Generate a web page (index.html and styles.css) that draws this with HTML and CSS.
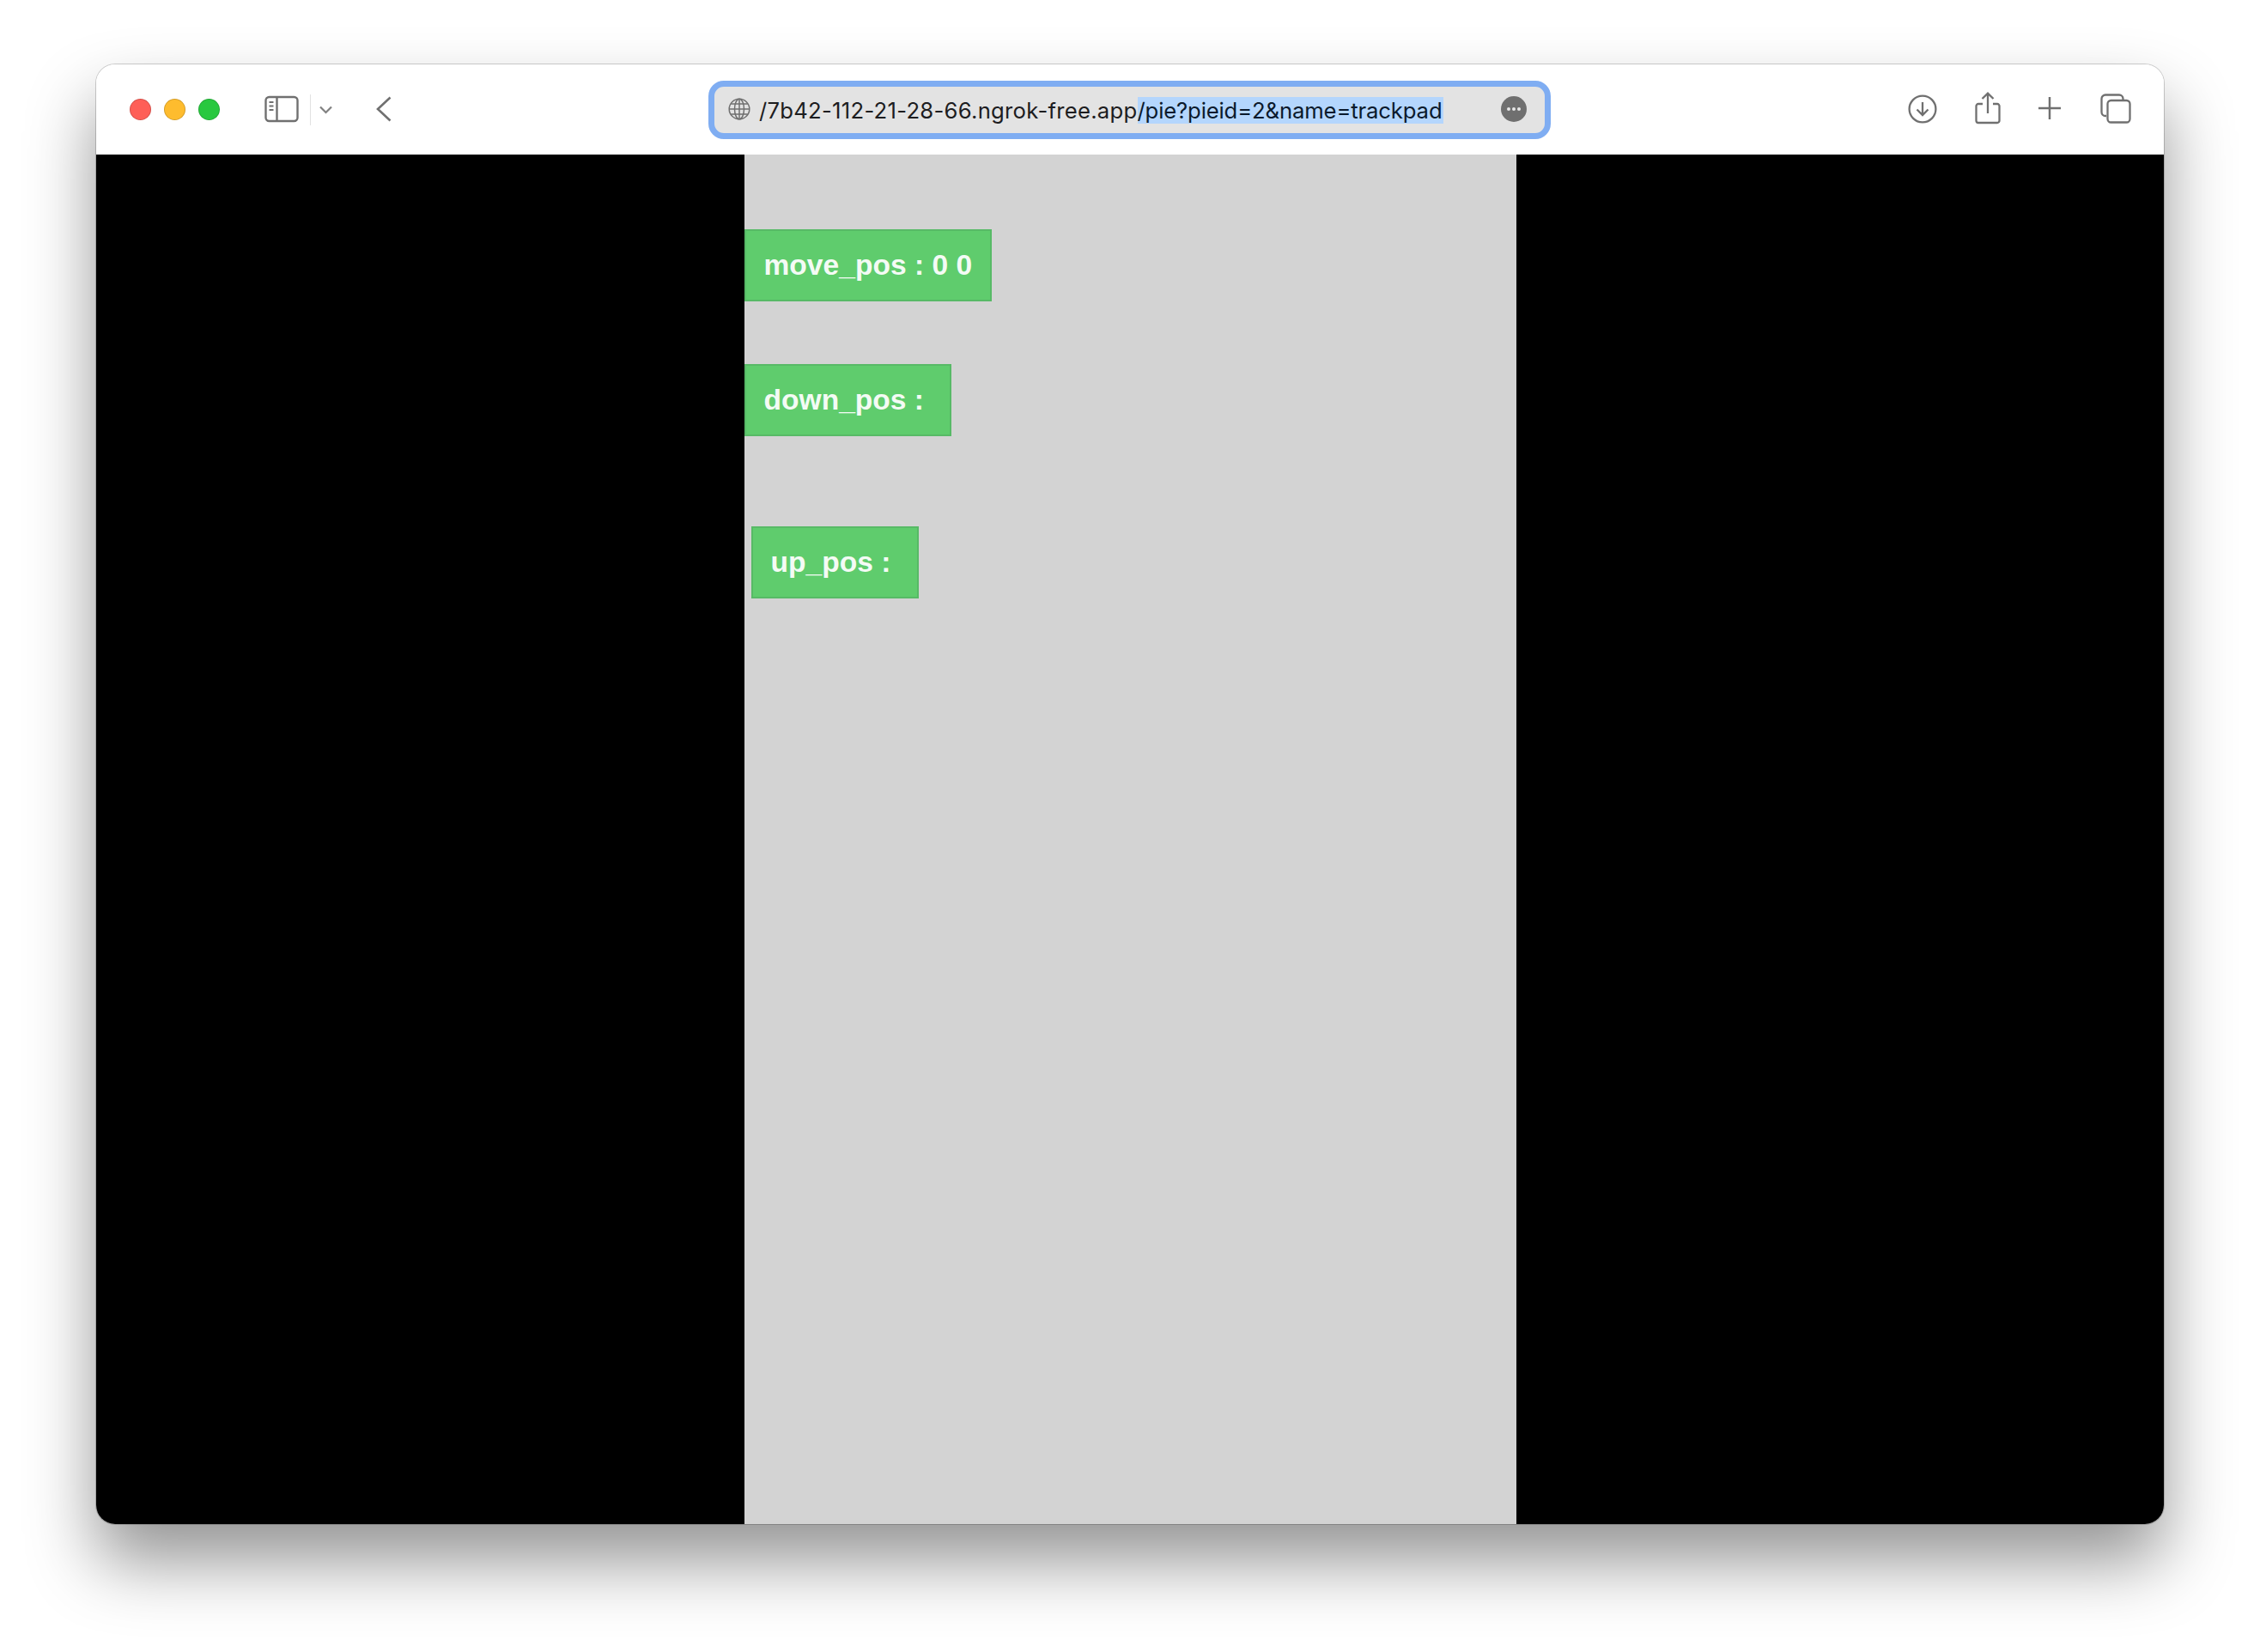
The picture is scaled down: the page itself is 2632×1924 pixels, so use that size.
FILE: index.html
```html
<!DOCTYPE html>
<html lang="en">
<head>
<meta charset="utf-8">
<title>trackpad</title>
<link rel="stylesheet" href="styles.css">
</head>
<body>
<div class="window">
  <header class="toolbar">
    <div class="lights">
      <span class="light red"></span>
      <span class="light yellow"></span>
      <span class="light green"></span>
    </div>
    <svg class="icon sidebar" width="40" height="32" viewBox="0 0 40 32" fill="none" stroke="#707070" stroke-width="2.4">
      <rect x="1.5" y="2" width="37" height="28" rx="4"/>
      <path d="M14.5 2v28"/>
      <path d="M5.5 8h5M5.5 12.5h5M5.5 17h5" stroke-width="1.8"/>
    </svg>
    <span class="divider"></span>
    <svg class="icon chevron" width="15" height="10" viewBox="0 0 15 10" fill="none" stroke="#808080" stroke-width="2.2">
      <path d="M1 1.5l6.5 6.5 6.5-6.5"/>
    </svg>
    <svg class="icon back" width="18" height="30" viewBox="0 0 18 30" fill="none" stroke="#707070" stroke-width="2.6">
      <path d="M16.5 1.5L2 15l14.5 13.5"/>
    </svg>
    <div class="address">
      <svg class="icon globe" width="26" height="26" viewBox="0 0 26 26" fill="none" stroke="#707070" stroke-width="1.5">
        <circle cx="13" cy="13" r="11.8"/>
        <ellipse cx="13" cy="13" rx="5.5" ry="11.8"/>
        <path d="M13 1v24M1.5 13h23M3.2 7h19.6M3.2 19h19.6"/>
      </svg>
      <span class="url">/7b42-112-21-28-66.ngrok-free.app<span class="selected">/pie?pieid=2&amp;name=trackpad</span></span>
      <span class="more"><i></i><i></i><i></i></span>
    </div>
    <svg class="icon download" width="34" height="34" viewBox="0 0 34 34" fill="none" stroke="#707070" stroke-width="2.3">
      <circle cx="17" cy="17" r="15.4"/>
      <path d="M17 9v15M10.5 17.5l6.5 6.5 6.5-6.5"/>
    </svg>
    <svg class="icon share" width="30" height="38" viewBox="0 0 30 38" fill="none" stroke="#707070" stroke-width="2.3">
      <path d="M9 14H4a2.500 2.500 0 0 0-2.500 2.500v17A2.500 2.500 0 0 0 4 36h22a2.500 2.500 0 0 0 2.500-2.500v-17A2.500 2.500 0 0 0 26 14h-5"/>
      <path d="M15 25V2M8.500 8L15 1.700 21.500 8"/>
    </svg>
    <svg class="icon plus" width="28" height="28" viewBox="0 0 28 28" fill="none" stroke="#707070" stroke-width="2.500">
      <path d="M14 1v26M1 14h26"/>
    </svg>
    <svg class="icon tabs" width="36" height="35" viewBox="0 0 36 35" fill="none" stroke="#707070" stroke-width="2.300">
      <path d="M7 26H6a4.500 4.500 0 0 1-4.500-4.500V6A4.500 4.500 0 0 1 6 1.500h16A4.500 4.500 0 0 1 26.500 6v2"/>
      <rect x="8.500" y="8" width="26" height="25.500" rx="4"/>
    </svg>
  </header>
  <main class="stage">
    <section class="pad">
      <div class="pos first">move_pos : 0 0</div>
      <div class="pos second">down_pos : </div>
      <div class="pos third">up_pos : </div>
    </section>
  </main>
</div>
</body>
</html>
```

FILE: styles.css
```css
* { box-sizing: border-box; }
html, body { margin: 0; background: #fff; }
body {
  width: 2632px;
  height: 1924px;
  padding: 75px 112px 0;
  overflow: hidden;
}
.window {
  width: 2408px;
  height: 1700px;
  border-radius: 22px;
  overflow: hidden;
  display: flex;
  flex-direction: column;
  background: #fff;
  box-shadow: 0 0 0 1px rgba(0,0,0,.18), 0 44px 80px rgba(0,0,0,.42);
}
.toolbar {
  height: 105px;
  flex: none;
  display: flex;
  align-items: center;
  padding: 0 38px 0 39px;
  background: #fff;
}
.lights { display: flex; gap: 15px; flex: none; }
.light {
  width: 25px;
  height: 25px;
  border-radius: 50%;
  border: 1px solid rgba(0,0,0,.16);
}
.red { background: #fe5f57; }
.yellow { background: #febc2e; }
.green { background: #28c83f; }
.icon { flex: none; display: block; }
.sidebar { margin-left: 52px; margin-top: -1px; }
.divider {
  flex: none;
  width: 1px;
  height: 36px;
  background: #e2e2e2;
  margin: 0 10px 0 13px;
}
.back { margin-left: 51px; margin-top: -2px; }
.address {
  flex: none;
  width: 981px;
  height: 68px;
  margin-left: 369px;
  margin-top: 1px;
  border: 7px solid #7fadf2;
  border-radius: 18px;
  background: #e3e3e3;
  display: flex;
  align-items: center;
  padding-left: 16px;
}
.globe { margin-top: -2px; }
.url {
  margin-left: 10px;
  font: 400 25.700px/31px Inter, "Liberation Sans", sans-serif;
  letter-spacing: 0.25px;
  color: #1d1d1f;
  white-space: nowrap;
}
.selected { background: #b4d6fd; color: #0b1a2c; letter-spacing: -0.15px; padding-right: 2px; }
.more {
  flex: none;
  width: 30px;
  height: 30px;
  margin-left: auto;
  margin-right: 21px;
  margin-top: -2px;
  border-radius: 50%;
  background: #6f6f6f;
  display: flex;
  align-items: center;
  justify-content: center;
  gap: 2px;
}
.more i {
  width: 4px;
  height: 4px;
  border-radius: 50%;
  background: #e8e8e8;
}
.download { margin-left: 416px; margin-top: -2px; }
.share { margin-left: 44px; margin-top: -4px; }
.plus { margin-left: 43px; margin-top: -3px; }
.tabs { margin-left: 45px; margin-top: -2px; }
.stage {
  flex: 1;
  background: #000;
  display: flex;
  justify-content: center;
}
.pad {
  width: 899px;
  background: #d3d3d3;
  display: flex;
  flex-direction: column;
  align-items: flex-start;
}
.pos {
  height: 84px;
  padding: 0 21px;
  background: #5fcc6d;
  border: 2px solid #57ba66;
  color: #f4fbf5;
  font: 700 33.600px/80px "Liberation Sans", Arial, sans-serif;
  white-space: pre;
}
.first { margin-top: 87px; }
.second { margin-top: 73px; }
.third { margin-top: 105px; margin-left: 8px; }
```
